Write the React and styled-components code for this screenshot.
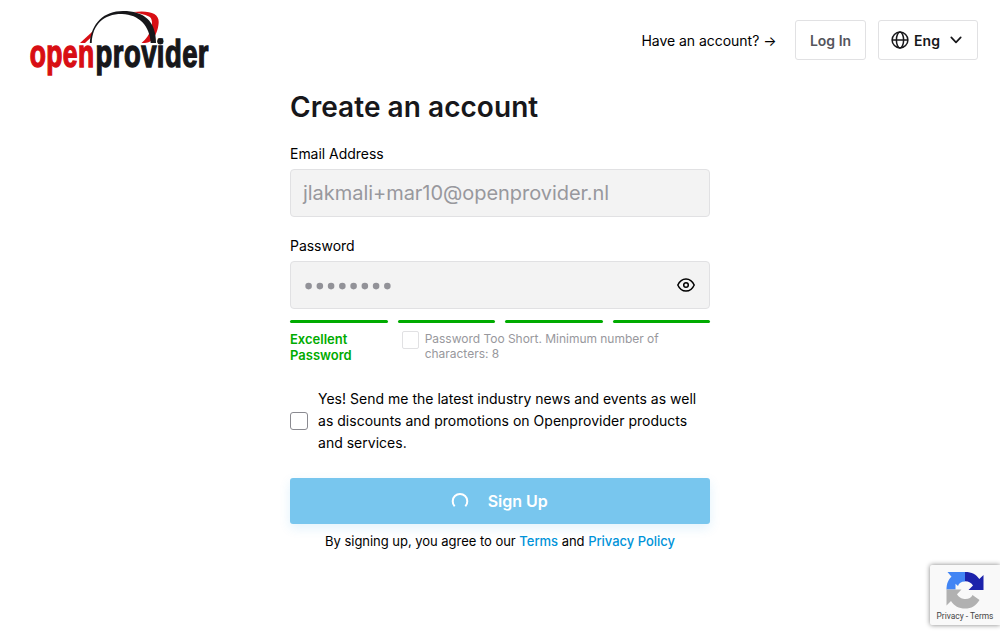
import React from 'react';
import styled, { createGlobalStyle } from 'styled-components';

const GlobalStyle = createGlobalStyle`
  * { box-sizing: border-box; }
  body {
    margin: 0;
    background: #fff;
    color: #000;
    font-family: Inter, "Liberation Sans", sans-serif;
    font-size: 14px;
    overflow: hidden;
  }
`;

const Page = styled.div`
  height: 639px;
  position: relative;
`;

const Header = styled.header`
  height: 80px;
  padding: 0 22px 0 20px;
  display: flex;
  justify-content: space-between;
`;

const HeaderActions = styled.div`
  height: 40px;
  margin-top: 20px;
  display: flex;
  align-items: center;
`;

const AccountHint = styled.span`
  margin: 2px 18.5px 0 0;
  letter-spacing: -0.03px;
  line-height: 20px;
`;

const HeaderButton = styled.button`
  height: 40px;
  width: ${({ $width }) => $width}px;
  margin-left: ${({ $gap }) => $gap || 0}px;
  padding: ${({ $pad }) => $pad || 0};
  display: flex;
  align-items: center;
  justify-content: center;
  border: 1px solid #e1e1e3;
  border-radius: 3px;
  background: #fff;
  color: ${({ $color }) => $color};
  font: 600 14px Inter, sans-serif;
`;

const LangName = styled.span`
  margin: 1px 10px 0 5px;
`;

const Form = styled.main`
  width: 420px;
  margin: 0 auto;
`;

const Title = styled.h1`
  margin: 0 0 20px;
  padding-top: 9px;
  font-size: 28px;
  line-height: 36px;
  font-weight: 600;
  letter-spacing: 0.05px;
  color: #17171a;
`;

const Label = styled.label`
  display: block;
  line-height: 18px;
  margin-bottom: 6px;
  letter-spacing: -0.03px;
`;

const Field = styled.div`
  height: 48px;
  padding: 0 14px 0 12px;
  margin-bottom: ${({ $below }) => $below}px;
  display: flex;
  align-items: center;
  justify-content: space-between;
  border: 1px solid #e1e1e3;
  border-radius: 4px;
  background: #f3f3f3;
  color: #98989d;
  font-size: 20px;
  letter-spacing: -0.04px;
`;

const Strength = styled.div`
  display: grid;
  grid-template-columns: repeat(4, 1fr);
  gap: 10px;
`;

const StrengthBar = styled.span`
  height: 3px;
  border-radius: 2px;
  background: #00ab00;
`;

const Feedback = styled.div`
  display: flex;
  padding-top: 8px;
  height: 65px;
`;

const Verdict = styled.div`
  width: 112px;
  color: #00ab00;
  font-size: 13px;
  font-weight: 600;
  line-height: 16px;
`;

const Rule = styled.div`
  width: 250px;
  margin-left: 5.7px;
  color: #98989d;
  font-size: 12px;
  line-height: 15px;
  letter-spacing: -0.02px;
`;

const Box = styled.span`
  flex: none;
  width: ${({ $width }) => $width}px;
  height: 18px;
  border: 1px solid ${({ $line }) => $line};
  border-radius: ${({ $radius }) => $radius}px;
  background: #fff;
`;

const Consent = styled.div`
  display: flex;
  align-items: center;
  gap: 10px;
  line-height: 22px;
  letter-spacing: 0.015px;
`;

const Submit = styled.button`
  width: 100%;
  height: 46px;
  margin-top: 24px;
  padding: 0 1px 0 0;
  display: flex;
  align-items: center;
  justify-content: center;
  gap: 18.5px;
  border: 0;
  border-radius: 3px;
  background: #78c6ee;
  box-shadow: 0 4px 12px rgba(0, 150, 230, 0.12);
  color: #fff;
  font: 600 16px Inter, sans-serif;
`;

const Legal = styled.p`
  margin: 8px 0 0;
  text-align: center;
  font-size: 13px;
  line-height: 18px;
  letter-spacing: -0.03px;
`;

const Link = styled.a`
  color: #0093d9;
  font-weight: 500;
`;

const Badge = styled.aside`
  position: absolute;
  right: 0;
  top: 565px;
  width: 70px;
  height: 60px;
  padding-top: 6px;
  display: flex;
  flex-direction: column;
  align-items: center;
  border-radius: 2px 0 0 2px;
  background: #f9f9f9;
  box-shadow: 0 0 5px gray;
`;

const BadgeText = styled.span`
  margin-top: 2px;
  font: 8.4px/11px Roboto, sans-serif;
  color: #444;
  white-space: nowrap;
`;

const Wordmark = styled.text`
  font: 700 38.5px "Liberation Sans", Arial, sans-serif;
  letter-spacing: 0.6px;
  fill: ${({ $ink }) => $ink};
  stroke: ${({ $ink }) => $ink};
  stroke-width: 1.2px;
  vector-effect: non-scaling-stroke;
`;

const Logo = () => (
  <svg width="200" height="80" viewBox="20 0 200 80" role="img" aria-label="openprovider">
    <path d="M80 43L92 32V36.5L85 43Z" fill="#d80e14" />
    <path d="M133 12C149 10 159 13 158.700 22C158.300 32 153 43 145 43H141.500C151 36 155.500 20 149 16.500C144.500 14 139 13.500 133 12Z" fill="#d80e14" />
    <path d="M89.800 43C91.500 23 104 11 123 11C144 11 156 21 156 43H150.700C150 26 139 14.300 122 13.900C104 13.700 92.500 24 91.700 43Z" fill="#17171a" />
    <Wordmark $ink="#d80e14" transform="translate(29.7 66.5) scale(.687 1)">open</Wordmark>
    <Wordmark $ink="#17171a" transform="translate(95.600 66.5) scale(.714 1)">provider</Wordmark>
    <circle cx="160.300" cy="41.300" r="3.100" fill="#17171a" />
  </svg>
);

const Globe = () => (
  <svg width="18" height="18" viewBox="0 0 18 18" fill="none" stroke="#17171a" strokeWidth="1.500">
    <circle cx="9" cy="9" r="7.900" />
    <ellipse cx="9" cy="9" rx="3.600" ry="7.900" />
    <path d="M1 9h16" />
  </svg>
);

const Chevron = () => (
  <svg width="12" height="8" viewBox="0 0 12 8" fill="none" stroke="#17171a" strokeWidth="1.700" strokeLinecap="round" strokeLinejoin="round">
    <path d="M1.300 1.300L6 6.300L10.700 1.300" />
  </svg>
);

const MaskedValue = () => (
  <svg width="94" height="10" viewBox="0 -1 94 10" fill="#929298" aria-label="Password value">
    {Array.from({ length: 8 }, (_, i) => (
      <circle key={i} cx={5.6 + i * 11.25} cy="5.1" r="3.3" />
    ))}
  </svg>
);

const Eye = () => (
  <svg width="18" height="14" viewBox="0 0 18 14" fill="none" stroke="#000" strokeWidth="1.500" strokeLinejoin="round">
    <path d="M.8 7C2.500 3.200 5.400 .9 9 .9S15.500 3.200 17.200 7C15.500 10.800 12.600 13.100 9 13.100S2.500 10.800 .8 7Z" />
    <circle cx="9" cy="7" r="2.300" />
  </svg>
);

const Spinner = () => (
  <svg width="18" height="18" viewBox="0 0 18 18" fill="none" stroke="#fff" strokeWidth="2">
    <path d="M3.700 14.300A7.300 7.300 0 1 1 14.300 14.300" />
  </svg>
);

const Recaptcha = () => (
  <svg width="38" height="38" viewBox="0 0 38 38">
    <path d="M.5 18.500C.5 12.500 2.400 8.500 5.500 5.700L1.500 1H19V10.500C15 10.500 13 12 12 15L9.500 12.800V18.500Z" fill="#4285f4" />
    <path d="M19 1C26 1 30.300 3.500 33.300 8L37.500 4V19H22.500L27 14.500C25.500 12 23 10.300 19 10.300Z" fill="#1c22ab" />
    <path d="M.5 18.500H15.500L11 23.300C13 27 16.500 28 19.500 28C23 28 25.300 26.500 26.500 24L33.500 29C30 35 25.500 37.500 19 37.500C13 37.500 8 35 5 30L.5 34.500Z" fill="#b1b1b1" />
  </svg>
);

export default function App() {
  return (
    <Page>
      <GlobalStyle />
      <Header>
        <Logo />
        <HeaderActions>
          <AccountHint>Have an account? →</AccountHint>
          <HeaderButton $width={71} $color="#55555c">Log In</HeaderButton>
          <HeaderButton $width={100} $gap={12} $pad="0 3px 0 0" $color="#17171a">
            <Globe />
            <LangName>Eng</LangName>
            <Chevron />
          </HeaderButton>
        </HeaderActions>
      </Header>
      <Form>
        <Title>Create an account</Title>
        <Label>Email Address</Label>
        <Field $below={20}>jlakmali+mar10@openprovider.nl</Field>
        <Label>Password</Label>
        <Field $below={11}>
          <MaskedValue />
          <Eye />
        </Field>
        <Strength>
          <StrengthBar /><StrengthBar /><StrengthBar /><StrengthBar />
        </Strength>
        <Feedback>
          <Verdict>Excellent<br />Password</Verdict>
          <Box $width={17} $line="#e1e1e3" $radius={2} />
          <Rule>Password Too Short. Minimum number of characters: 8</Rule>
        </Feedback>
        <Consent>
          <Box $width={18} $line="#8a8a90" $radius={3} />
          <span>Yes! Send me the latest industry news and events as well as discounts and promotions on Openprovider products and services.</span>
        </Consent>
        <Submit><Spinner />Sign Up</Submit>
        <Legal>By signing up, you agree to our <Link>Terms</Link> and <Link>Privacy Policy</Link></Legal>
      </Form>
      <Badge>
        <Recaptcha />
        <BadgeText>Privacy - Terms</BadgeText>
      </Badge>
    </Page>
  );
}
